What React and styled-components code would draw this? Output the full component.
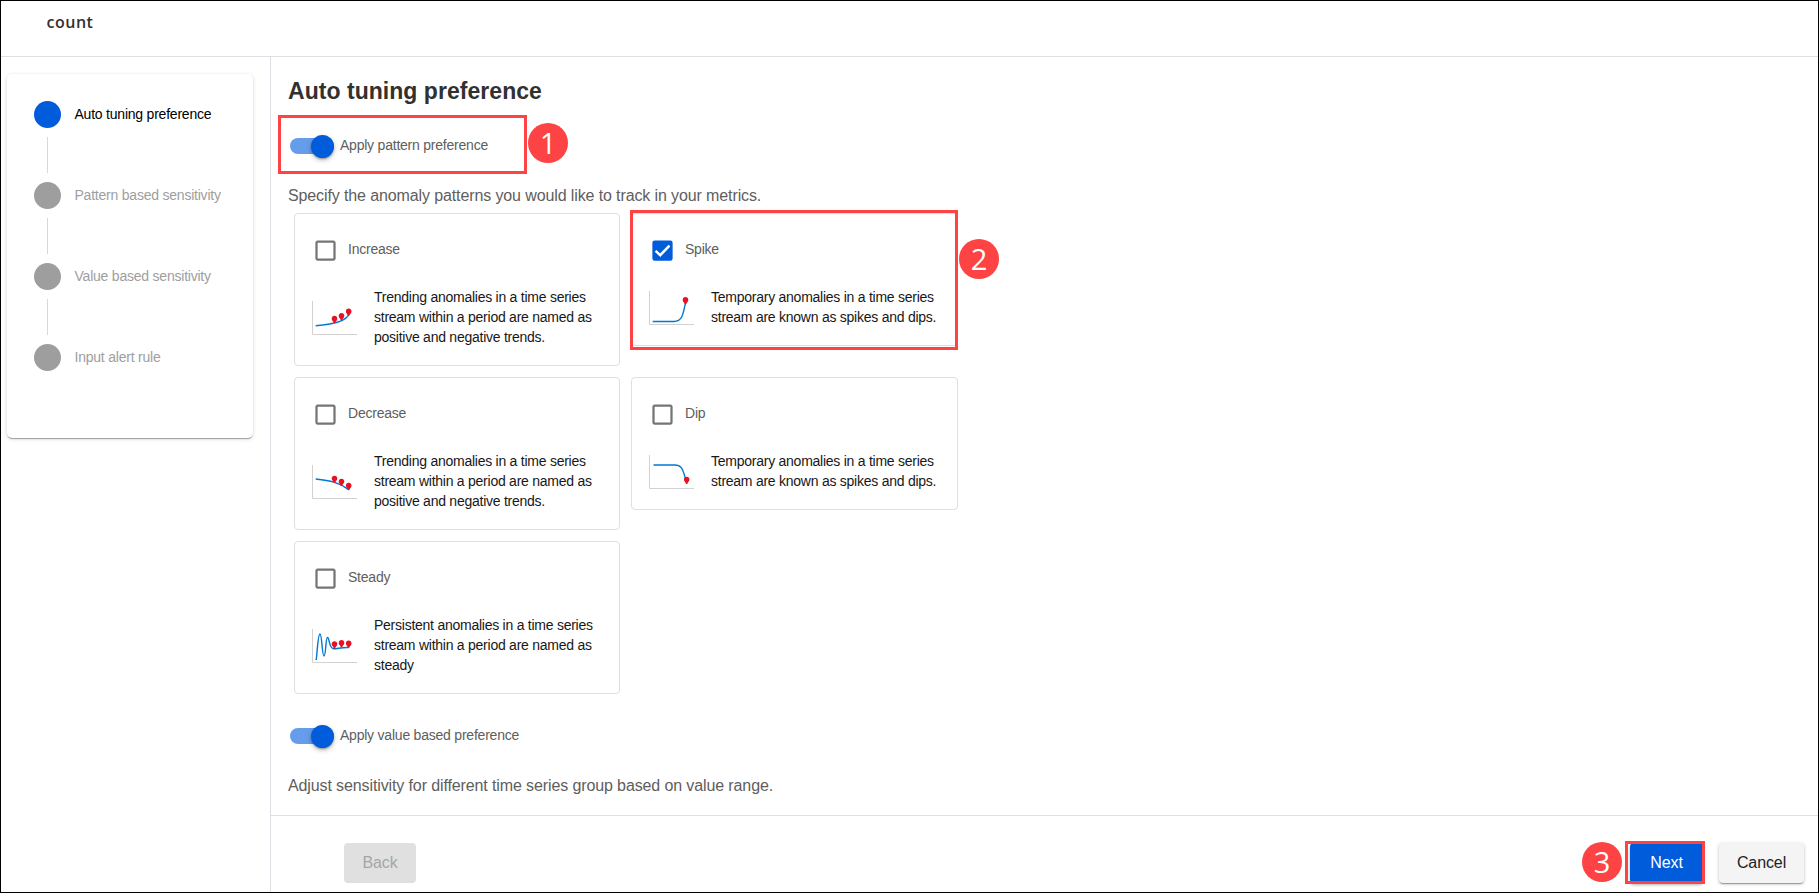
import React from 'react';
import styled, { createGlobalStyle, css } from 'styled-components';

const GlobalStyle = createGlobalStyle`
  *, *::before, *::after { box-sizing: border-box; }
  body {
    margin: 0;
    background: #fff;
    font-family: "Liberation Sans", Arial, sans-serif;
  }
`;

const Page = styled.div`
  width: 1819px;
  height: 893px;
  border: 1px solid #000;
  display: flex;
  flex-direction: column;
  overflow: hidden;
  background: #fff;
`;

const Header = styled.header`
  flex: none;
  height: 56px;
  padding: 6px 45.5px 0;
  border-bottom: 1px solid #dedfe5;
  font: 600 16px/30px "Open Sans", "Noto Sans", sans-serif;
  letter-spacing: 0.5px;
  color: #323130;
`;

const Body = styled.div`
  flex: 1;
  min-height: 0;
  display: flex;
`;

const Sidebar = styled.aside`
  width: 270px;
  flex: none;
  padding: 17px 0 0 6px;
  border-right: 1px solid #dedfe5;
`;

const Stepper = styled.ol`
  width: 246px;
  height: 364px;
  margin: 0;
  padding: 27px;
  list-style: none;
  border-radius: 5px;
  box-shadow: 0 2px 1px -1px rgba(0, 0, 0, 0.2), 0 1px 1px rgba(0, 0, 0, 0.14),
    0 1px 4px rgba(0, 0, 0, 0.14);
`;

const Step = styled.li`
  display: grid;
  grid-template-columns: 27px 1fr;
  column-gap: 13.5px;
  align-items: center;
  font-size: 14px;
  line-height: 27px;
  letter-spacing: -0.22px;
  color: ${(p) => (p.$active ? '#000' : '#9e9e9e')};
`;

const StepDot = styled.span`
  width: 27px;
  height: 27px;
  border-radius: 50%;
  background: ${(p) => (p.$active ? '#005cdb' : '#9e9e9e')};
`;

const StepLine = styled.span`
  width: 1px;
  height: 36px;
  margin: 9px 13px;
  background: #d8d8d8;
`;

const Main = styled.main`
  flex: 1;
  display: flex;
  flex-direction: column;
`;

const Content = styled.section`
  height: 759px;
  padding: 20px 17px 0;
  border-bottom: 1px solid #dedfe1;
`;

const Title = styled.h1`
  margin: 0;
  font-size: 23px;
  line-height: 28px;
  letter-spacing: 0.04px;
  color: #323130;
`;

const Marked = styled.div`
  position: relative;
  display: flex;
  min-width: 0;
`;

const Highlight = styled.span`
  position: absolute;
  inset: ${(p) => p.$inset};
  width: ${(p) => p.$width || 'auto'};
  border: 3px solid #fd4344;
  pointer-events: none;
`;

const Callout = styled.span`
  position: absolute;
  left: ${(p) => p.$left};
  top: ${(p) => p.$top};
  width: 40px;
  height: 40px;
  border-radius: 50%;
  background: #fd4344;
  color: #fff;
  font: 29px/39px "Open Sans", "Noto Sans", sans-serif;
  text-align: center;
`;

const ToggleRow = styled.label`
  display: flex;
  align-items: center;
  width: 240px;
  height: 24px;
  padding-left: 2px;
  font-size: 14px;
  letter-spacing: -0.22px;
  color: #605e5c;
`;

const ToggleText = styled.span`
  padding-bottom: 2px;
`;

const Track = styled.span`
  display: flex;
  justify-content: flex-end;
  align-items: center;
  width: 43.6px;
  height: 16px;
  margin-right: 6.4px;
  border-radius: 8px;
  background: #669dea;
`;

const Thumb = styled.span`
  width: 23px;
  height: 23px;
  flex: none;
  border-radius: 50%;
  background: #005cdb;
  box-shadow: 0 2px 2px -1px rgba(0, 0, 0, 0.2), 0 1px 2px rgba(0, 0, 0, 0.14),
    0 2px 5px rgba(0, 0, 0, 0.25);
`;

const Lead = styled.p`
  margin: 0;
  font-size: 16px;
  line-height: 24px;
  letter-spacing: -0.115px;
  color: #605e5c;
`;

const ToggleSlot = styled.div`
  margin: ${(p) => p.$margin};
`;

const Cards = styled.div`
  display: grid;
  grid-template-columns: 326px 327px;
  gap: 11px;
  align-items: start;
  padding: 5px 0 0 6px;
`;

const Card = styled.article`
  width: 100%;
  padding: 22px 17px 18px;
  border: 1px solid #dfdfe1;
  border-radius: 4px;
`;

const CheckRow = styled.label`
  display: flex;
  align-items: center;
  gap: 9px;
  height: 28px;
  font-size: 14px;
  letter-spacing: -0.22px;
  color: #605e5c;
`;

const CheckText = styled.span`
  padding-bottom: 2px;
`;

const CheckSvg = styled.svg`
  width: 27px;
  height: 27px;
  flex: none;
  fill: ${(p) => (p.$checked ? '#005cdb' : '#757575')};
`;

const CardInfo = styled.div`
  display: flex;
  align-items: center;
  gap: 16px;
  margin-top: 23px;
`;

const Chart = styled.svg`
  width: 46px;
  height: 36px;
  flex: none;
  fill: none;
`;

const Description = styled.p`
  margin: 0;
  font-size: 14px;
  line-height: 20px;
  letter-spacing: -0.25px;
  color: #171717;
  white-space: pre;
`;

const Footer = styled.footer`
  flex: 1;
  display: flex;
  align-items: flex-start;
  padding: 27px 14px 0 73px;
`;

const buttonKinds = {
  disabled: css`
    width: 72px;
    background: #e0e0e0;
    color: #a6a6a6;
  `,
  primary: css`
    width: 73px;
    background: #005cdb;
    color: #fff;
    box-shadow: 0 2px 3px rgba(0, 0, 0, 0.3);
  `,
  secondary: css`
    width: 85px;
    background: #f4f4f4;
    color: #222;
    box-shadow: 0 2px 1px -1px rgba(0, 0, 0, 0.25), 0 1px 2px rgba(0, 0, 0, 0.18),
      0 1px 4px rgba(0, 0, 0, 0.14);
  `,
};

const Button = styled.button`
  height: 40px;
  padding: 0;
  border: 0;
  border-radius: 4px;
  font: 16px/38px "Liberation Sans", Arial, sans-serif;
  letter-spacing: -0.1px;
  ${(p) => buttonKinds[p.$kind]}
`;

const Actions = styled.div`
  display: flex;
  gap: 16px;
  margin-left: auto;
`;

const steps = [
  'Auto tuning preference',
  'Pattern based sensitivity',
  'Value based sensitivity',
  'Input alert rule',
];

const pins = {
  increase: [[22.5, 18], [29.5, 15.2], [36.7, 10.7]],
  spike: [[36.5, 9.2]],
  decrease: [[22.5, 13.9], [29.5, 16.9], [36.7, 21]],
  dip: [[37.7, 24.9]],
  steady: [[22.5, 15.4], [29.5, 14.2], [36.7, 14.7]],
};

const curves = {
  increase: 'M3.7 24.8C18 23.5 36 21 37 12',
  spike: 'M3.7 30.5H25C33 30.5 34 24 36.7 11',
  decrease: 'M3.7 14C18 15.5 27 17 37 25',
  dip: 'M4.5 10H25C33 9.7 33.5 14 37 25',
  steady: 'M4.2 31C5.5 20 6 5 8 5S10 27 12 27S13.5 8.5 15.5 8.5S17 19.7 21.5 19.7S29 18.2 37 18.5',
};

const cards = [
  { label: 'Increase', kind: 'increase', text: 'Trending anomalies in a time series\nstream within a period are named as\npositive and negative trends.' },
  { label: 'Spike', kind: 'spike', checked: true, text: 'Temporary anomalies in a time series\nstream are known as spikes and dips.' },
  { label: 'Decrease', kind: 'decrease', text: 'Trending anomalies in a time series\nstream within a period are named as\npositive and negative trends.' },
  { label: 'Dip', kind: 'dip', text: 'Temporary anomalies in a time series\nstream are known as spikes and dips.' },
  { label: 'Steady', kind: 'steady', text: 'Persistent anomalies in a time series\nstream within a period are named as\nsteady' },
];

function Toggle({ children }) {
  return (
    <ToggleRow>
      <Track><Thumb /></Track>
      <ToggleText>{children}</ToggleText>
    </ToggleRow>
  );
}

function Checkbox({ checked }) {
  return (
    <CheckSvg viewBox="0 0 24 24" $checked={checked}>
      {checked ? (
        <>
          <rect x="3" y="3" width="18" height="18" rx="2" />
          <path d="M5.8 12.3L10 16.2L18.2 7.6" fill="none" stroke="#fff" strokeWidth="2.2" />
        </>
      ) : (
        <path d="M19 5v14H5V5h14m0-2H5c-1.1 0-2 .9-2 2v14c0 1.1.9 2 2 2h14c1.1 0 2-.9 2-2V5c0-1.1-.9-2-2-2z" />
      )}
    </CheckSvg>
  );
}

function PatternChart({ kind }) {
  return (
    <Chart viewBox="0 -2 46 36">
      <path d="M.5 0V33.5H45" stroke="#d2d2d2" />
      <path d={curves[kind]} stroke="#0078d4" strokeWidth="1.4" />
      {pins[kind].map(([x, y]) => (
        <path
          key={x}
          fill="#e81123"
          transform={`translate(${x} ${y})`}
          d="M0 -3.2C1.7 -3.2 2.8 -1.9 2.8 -.3C2.8 1.4 1.3 2.2 .6 4H-.6C-1.3 2.2 -2.8 1.4 -2.8 -.3C-2.8 -1.9 -1.7 -3.2 0 -3.2Z"
        />
      ))}
    </Chart>
  );
}

function PatternCard({ label, kind, checked, text }) {
  return (
    <Marked>
      <Card>
        <CheckRow>
          <Checkbox checked={checked} />
          <CheckText>{label}</CheckText>
        </CheckRow>
        <CardInfo>
          <PatternChart kind={kind} />
          <Description>{text}</Description>
        </CardInfo>
      </Card>
      {checked && (
        <>
          <Highlight $inset="-3px 0 -4px -1px" />
          <Callout $left="328px" $top="26px">2</Callout>
        </>
      )}
    </Marked>
  );
}

export default function App() {
  return (
    <Page>
      <GlobalStyle />
      <Header>count</Header>
      <Body>
        <Sidebar>
          <Stepper>
            {steps.map((name, i) => (
              <Step key={name} $active={i === 0}>
                <StepDot $active={i === 0} />
                <span>{name}</span>
                {i < steps.length - 1 && <StepLine />}
              </Step>
            ))}
          </Stepper>
        </Sidebar>
        <Main>
          <Content>
            <Title>Auto tuning preference</Title>
            <ToggleSlot $margin="29px 0 26px">
              <Marked>
                <Toggle>Apply pattern preference</Toggle>
                <Highlight $inset="-19px auto -16px -10px" $width="249px" />
                <Callout $left="240px" $top="-11px">1</Callout>
              </Marked>
            </ToggleSlot>
            <Lead>Specify the anomaly patterns you would like to track in your metrics.</Lead>
            <Cards>
              {cards.map((card) => <PatternCard key={card.kind} {...card} />)}
            </Cards>
            <ToggleSlot $margin="30px 0 26px">
              <Toggle>Apply value based preference</Toggle>
            </ToggleSlot>
            <Lead>Adjust sensitivity for different time series group based on value range.</Lead>
          </Content>
          <Footer>
            <Button $kind="disabled" disabled>Back</Button>
            <Actions>
              <Marked>
                <Button $kind="primary">Next</Button>
                <Highlight $inset="-2px -2px -1px -5px" />
                <Callout $left="-48px" $top="-1px">3</Callout>
              </Marked>
              <Button $kind="secondary">Cancel</Button>
            </Actions>
          </Footer>
        </Main>
      </Body>
    </Page>
  );
}
